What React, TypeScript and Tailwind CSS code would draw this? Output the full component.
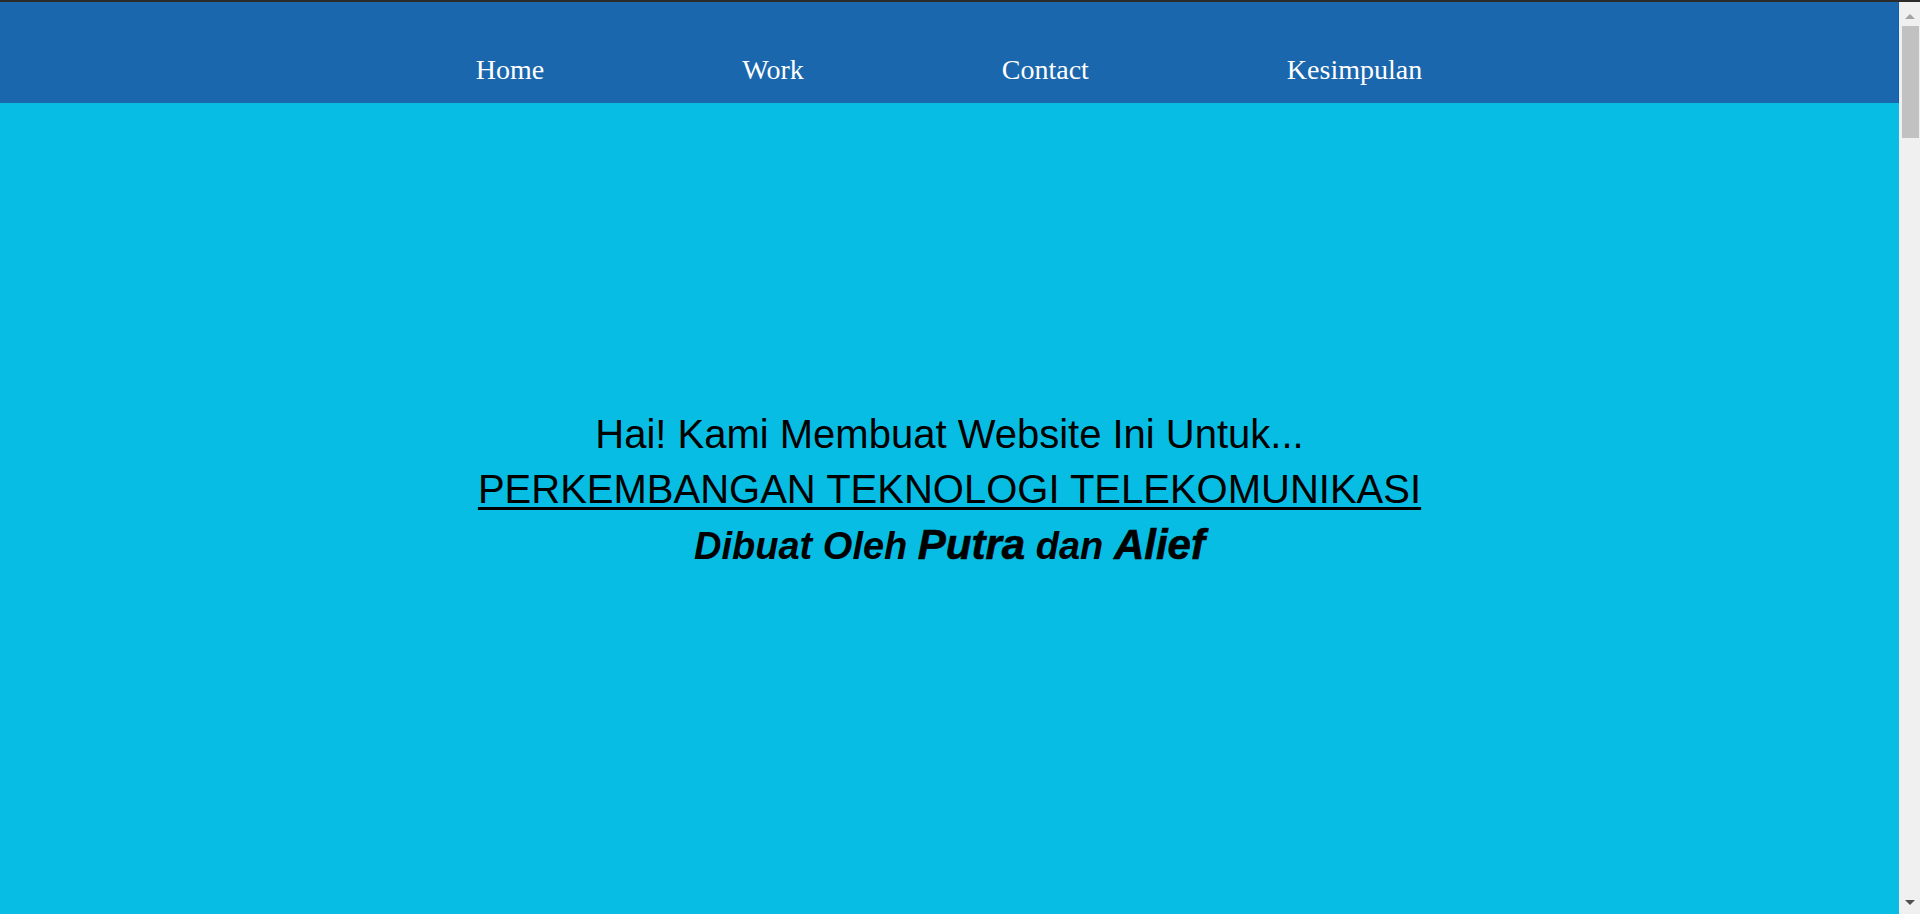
import React from 'react';

const navLinks = ['Home', 'Work', 'Contact', 'Kesimpulan'];

function FakeScrollbar() {
  return (
    <div className="flex w-[21px] flex-col items-center bg-[#f0f0f0]">
      {/* up arrow */}
      <div className="mt-[12px] h-0 w-0 border-x-[5px] border-b-[5px] border-x-transparent border-b-[#a3a3a3]" />
      <div className="ml-[2px] mt-[7px] h-[112px] w-[17px] bg-[#c1c1c1]" />
      <div className="flex-1" />
      {/* down arrow */}
      <div className="mb-[9px] h-0 w-0 border-x-[5px] border-t-[5px] border-x-transparent border-t-[#505050]" />
    </div>
  );
}

export default function App() {
  return (
    <div className="flex h-[914px] w-full flex-col overflow-hidden">
      <div className="h-[2px] w-full bg-[#2b2b2b]" />
      <div className="flex min-h-0 flex-1">
        <div className="flex min-w-0 flex-1 flex-col">
          {/* Navbar */}
          <nav className="h-[101px] border-r border-[#0f5fb0] bg-[#1a67ad] pt-[52px]">
            <ul className="flex justify-center gap-[198px]">
              {navLinks.map((link) => (
                <li
                  key={link}
                  className="text-[28px] leading-[32px] text-white"
                  style={{ fontFamily: '"Liberation Serif", "Times New Roman", serif' }}
                >
                  <a href="#">{link}</a>
                </li>
              ))}
            </ul>
          </nav>

          {/* Hero */}
          <main
            className="flex-1 bg-[#08bde3] pt-[304px] text-center text-black"
            style={{ fontFamily: '"Liberation Sans", Arial, sans-serif' }}
          >
            <p className="text-[40px] leading-[55px]">Hai! Kami Membuat Website Ini Untuk...</p>
            <p className="text-[40px] leading-[55px] underline decoration-[3px] underline-offset-[4px]">
              PERKEMBANGAN TEKNOLOGI TELEKOMUNIKASI
            </p>
            <p className="text-[38px] font-bold italic leading-[55px]">
              Dibuat Oleh <span className="text-[42px] [-webkit-text-stroke:0.6px_black]">Putra</span> dan{' '}
              <span className="text-[42px] [-webkit-text-stroke:0.6px_black]">Alief</span>
            </p>
          </main>
        </div>
        <FakeScrollbar />
      </div>
    </div>
  );
}
